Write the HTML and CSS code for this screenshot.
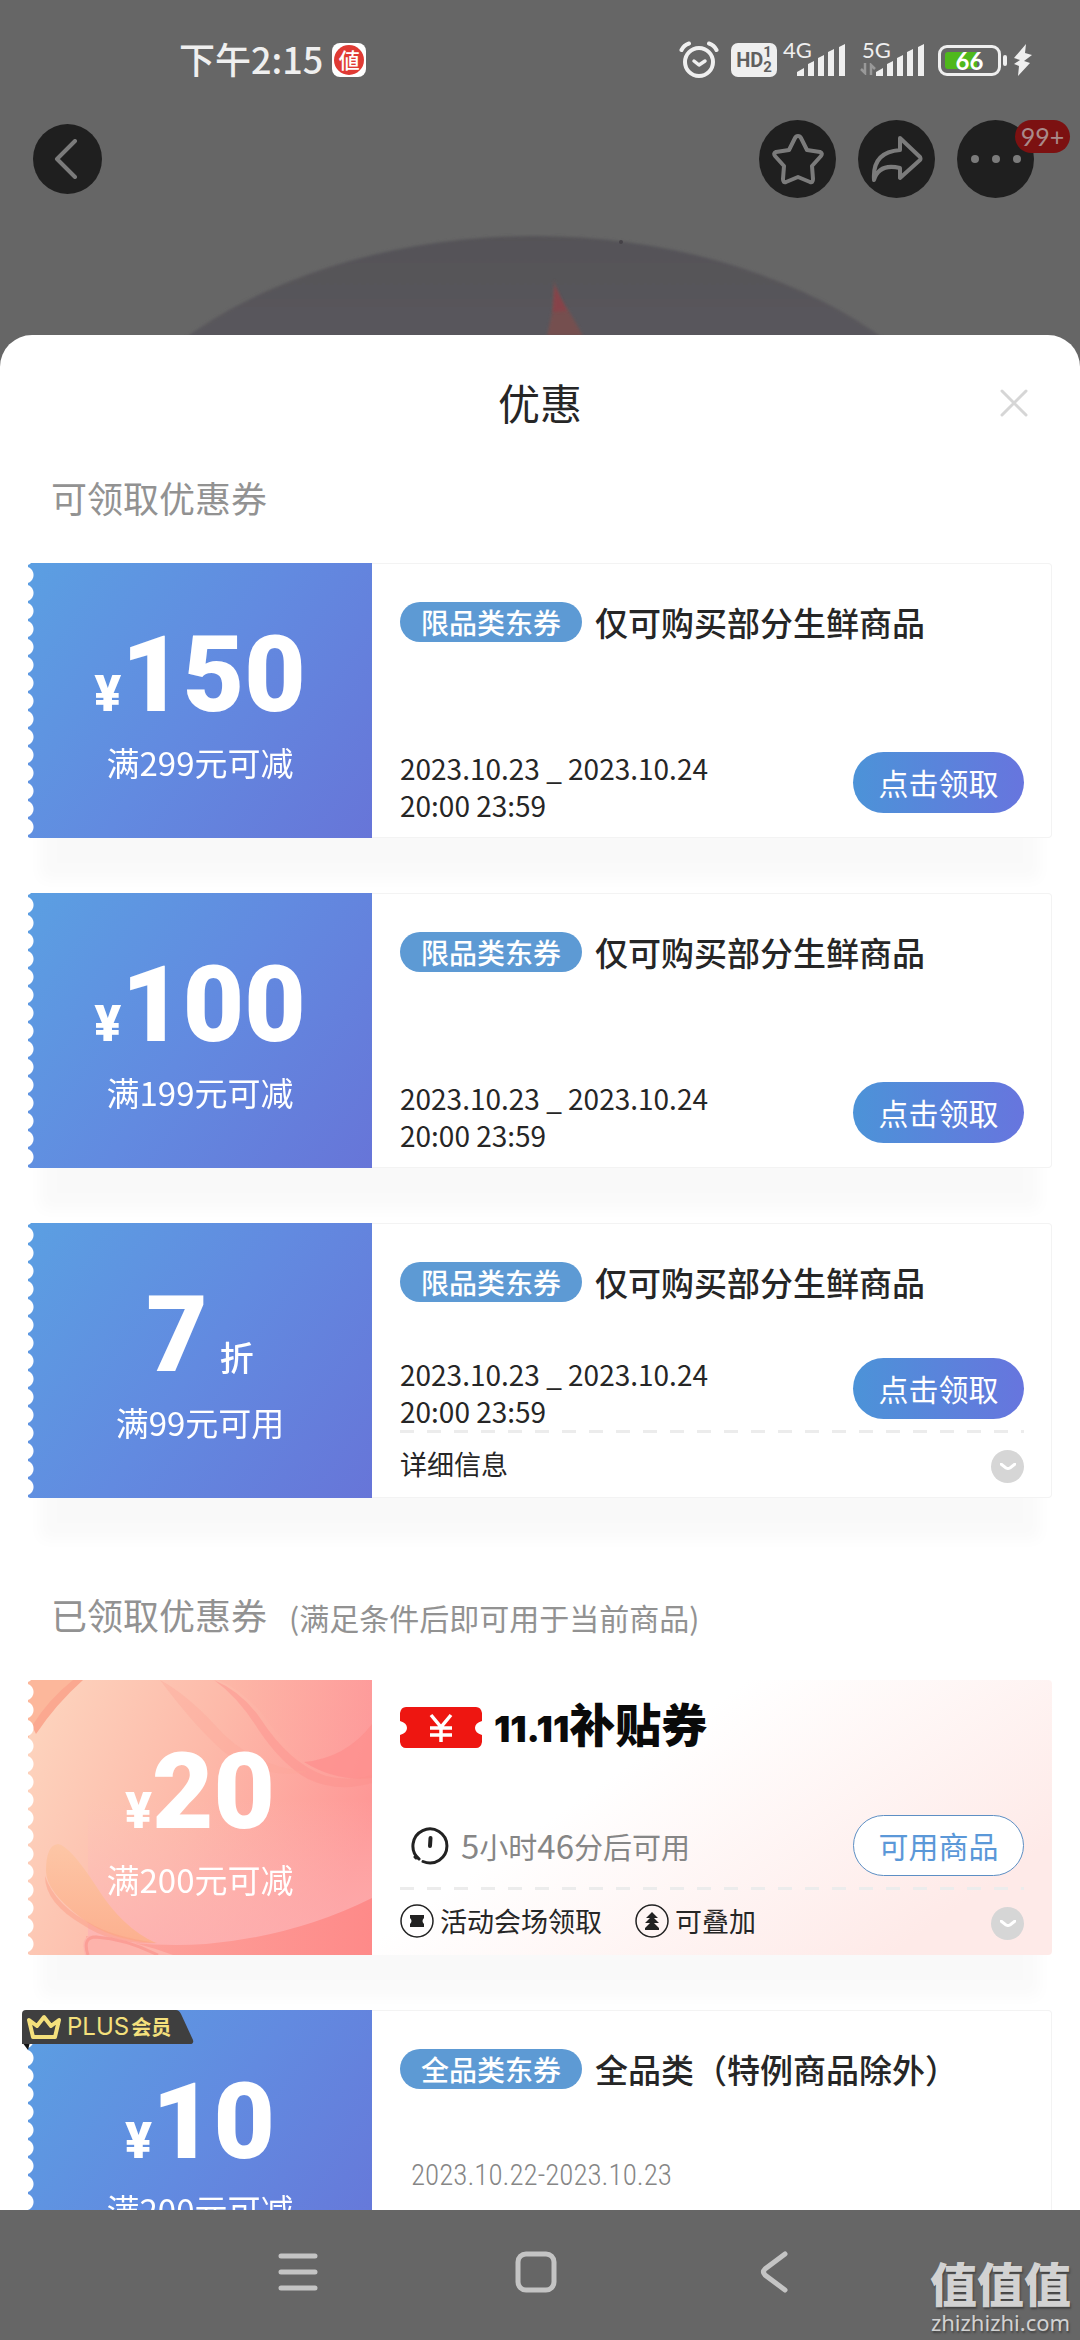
FILE: index.html
```html
<!DOCTYPE html>
<html lang="zh-CN">
<head>
<meta charset="utf-8">
<meta name="viewport" content="width=device-width, initial-scale=1">
<title>优惠</title>
<link rel="stylesheet" href="styles.css">
</head>
<body>
<div class="screen">
  <header class="hero">
    <svg class="plate" viewBox="0 0 1080 335" preserveAspectRatio="xMidYMax slice" aria-hidden="true">
      <defs>
        <linearGradient id="plateFill" x1="0" y1="0" x2="0" y2="1">
          <stop offset="0" stop-color="#545257"/>
          <stop offset=".3" stop-color="#5e5b60"/>
        </linearGradient>
        <filter id="soft" x="-10%" y="-10%" width="120%" height="120%"><feGaussianBlur stdDeviation="1.5"/></filter>
      </defs>
      <ellipse cx="534" cy="561" rx="480" ry="325" fill="url(#plateFill)" filter="url(#soft)"/>
      <path d="M547 336l6-28 1-28q4 20 15 31l14 25z" fill="#75504f" filter="url(#soft)"/>
      <path d="M553 312l2-26 12 25z" fill="#864349" filter="url(#soft)"/>
      <circle cx="621" cy="242" r="2" fill="#454247"/>
    </svg>

    <div class="status">
      <span class="status-time">下午2:15</span>
      <span class="app-mark"><span class="app-mark-dot">値</span></span>
      <div class="status-icons">
        <svg width="40" height="38" viewBox="0 0 40 38" fill="none" stroke="#efefef" stroke-linecap="round">
          <circle cx="20" cy="21" r="14" stroke-width="4"/>
          <path d="M2.500 9Q5 4 10 2.500M37.500 9Q35 4 30 2.500" stroke-width="4"/>
          <path d="M15 20l5 4 6-4" stroke-width="3.500" stroke-linejoin="round"/>
        </svg>
        <span class="hd"><b>HD</b><span class="hd-sims"><b>1</b><b>2</b></span></span>
        <span class="signal">
          <span class="net">4G</span>
          <svg width="48" height="32" viewBox="0 0 48 32" fill="#efefef"><path d="M0 32v-4l7-4v8zM11 32V20l6-3v15zM21 32V14l6-3v21zM31 32V8l6-3v27zM42 32V3l6-3v32z"/></svg>
        </span>
        <span class="signal">
          <span class="net">5G</span>
          <svg class="traffic" width="16" height="12" viewBox="0 0 16 12" fill="none" stroke="#999" stroke-width="2.500"><path d="M5 0v10L1 6M11 12V2l4 4"/></svg>
          <svg width="48" height="32" viewBox="0 0 48 32" fill="#efefef"><path d="M0 32v-4l7-4v8zM11 32V20l6-3v15zM21 32V14l6-3v21zM31 32V8l6-3v27zM42 32V3l6-3v32z"/></svg>
        </span>
        <span class="battery"><span class="battery-level">66</span></span>
        <svg width="20" height="32" viewBox="0 0 20 32" fill="#efefef"><path d="M13 0L1 14l6 2-6 4 5 2-1 10L17 19l-6-2 8-6-7-2z"/></svg>
      </div>
    </div>

    <nav class="tools" aria-label="商品">
      <button class="tool tool-back" type="button" aria-label="返回">
        <svg width="24" height="40" viewBox="0 0 24 40"><path d="M21 2L3 20l18 18"/></svg>
      </button>
      <button class="tool" type="button" aria-label="收藏">
        <svg width="52" height="52" viewBox="0 0 52 52"><path d="M26 3q2 0 3 2l6 12 13 2q3 1 1 4l-9 10 1 13q0 4-3 3l-12-5-12 5q-3 1-3-3l1-13-9-10q-2-3 1-4l13-2 6-12q1-2 3-2z"/></svg>
      </button>
      <button class="tool" type="button" aria-label="分享">
        <svg width="52" height="48" viewBox="0 0 52 48"><path d="M29 3l20 19q1 2 0 3L29 43V33Q8 28 3 45 1 17 29 15z"/></svg>
      </button>
      <button class="tool" type="button" aria-label="更多">
        <svg class="dots" width="52" height="12" viewBox="0 0 52 12"><circle cx="5" cy="6" r="4"/><circle cx="26" cy="6" r="4"/><circle cx="47" cy="6" r="4"/></svg>
        <span class="badge">99+</span>
      </button>
    </nav>
  </header>

  <main class="sheet">
    <div class="sheet-head">
      <h1 class="sheet-title">优惠</h1>
      <button class="close" type="button" aria-label="关闭">
        <svg width="28" height="28" viewBox="0 0 28 28" fill="none" stroke="#d6d6d6" stroke-width="3" stroke-linecap="round"><path d="M2 2l24 24M26 2L2 26"/></svg>
      </button>
    </div>

    <section class="group">
      <h2 class="group-title">可领取优惠券</h2>
      <div class="coupons">
        <article class="coupon">
          <div class="face">
            <p class="amount"><span class="unit">¥</span>150</p>
            <p class="rule">满299元可减</p>
          </div>
          <div class="body">
            <h3 class="name"><span class="tag">限品类东券</span>仅可购买部分生鲜商品</h3>
            <div class="action">
              <p class="period">2023.10.23 _ 2023.10.24<br>20:00 23:59</p>
              <button class="claim" type="button">点击领取</button>
            </div>
          </div>
        </article>

        <article class="coupon">
          <div class="face">
            <p class="amount"><span class="unit">¥</span>100</p>
            <p class="rule">满199元可减</p>
          </div>
          <div class="body">
            <h3 class="name"><span class="tag">限品类东券</span>仅可购买部分生鲜商品</h3>
            <div class="action">
              <p class="period">2023.10.23 _ 2023.10.24<br>20:00 23:59</p>
              <button class="claim" type="button">点击领取</button>
            </div>
          </div>
        </article>

        <article class="coupon">
          <div class="face">
            <p class="amount">7<span class="fold">折</span></p>
            <p class="rule">满99元可用</p>
          </div>
          <div class="body has-detail">
            <h3 class="name"><span class="tag">限品类东券</span>仅可购买部分生鲜商品</h3>
            <div class="action">
              <p class="period">2023.10.23 _ 2023.10.24<br>20:00 23:59</p>
              <button class="claim" type="button">点击领取</button>
            </div>
            <div class="detail">
              <span>详细信息</span>
              <button class="more" type="button" aria-label="展开"><svg width="16" height="8" viewBox="0 0 16 8"><path d="M1 1l5 4q2 1 4 0l5-4"/></svg></button>
            </div>
          </div>
        </article>
      </div>
    </section>

    <section class="group group-owned">
      <h2 class="group-title">已领取优惠券<small class="group-note">(满足条件后即可用于当前商品)</small></h2>
      <div class="coupons">
        <article class="coupon coupon-pink">
          <div class="face">
            <svg class="art" viewBox="0 0 344 275" preserveAspectRatio="none" aria-hidden="true">
              <defs>
                <linearGradient id="base" x1="0" y1=".2" x2="1" y2=".5">
                  <stop offset="0" stop-color="#fdd3bd"/><stop offset=".5" stop-color="#fdb9a9"/><stop offset="1" stop-color="#fe9796"/>
                </linearGradient>
                <linearGradient id="leaf" x1="0" y1="0" x2="0" y2="1">
                  <stop offset="0" stop-color="#fdc6a6"/><stop offset="1" stop-color="#fcb08f"/>
                </linearGradient>
                <linearGradient id="coral" x1="0" y1="0" x2="1" y2="0">
                  <stop offset="0" stop-color="#fda79e"/><stop offset="1" stop-color="#fe8a89"/>
                </linearGradient>
                <linearGradient id="veil" x1="0" y1="0" x2="1" y2="0">
                  <stop offset="0" stop-color="#fdb7a6"/><stop offset="1" stop-color="#fd9a9b"/>
                </linearGradient>
                <linearGradient id="lower" x1="0" y1="0" x2="0" y2="1">
                  <stop offset="0" stop-color="#fdbfc0" stop-opacity="0"/><stop offset="1" stop-color="#fdafb2" stop-opacity=".8"/>
                </linearGradient>
              </defs>
              <path fill="url(#base)" d="M0 0h344v275H0z"/>
              <path fill="url(#lower)" d="M60 120h284v155H60z"/>
              <path fill="#fcb79b" d="M0 0h48Q20 22 0 58z"/>
              <path fill="#fba890" d="M45 0h10Q28 24 8 54L4 46Q20 20 45 0z"/>
              <path fill="url(#veil)" opacity=".7" d="M190 0h154v44q-26 36-68 38-22-20-42-48-20-24-44-34z"/>
              <path fill="#fe8f8e" opacity=".75" d="M344 44v54q-36 4-68-16 42-4 68-38z"/>
              <path fill="#fd908c" opacity=".45" d="M186 0q28 12 46 38 30 46 66 58 24 6 46-1v8q-34 10-64-4-26-14-50-50-20-32-44-49z"/>
              <path fill="#fda799" opacity=".35" d="M132 0q26 14 54 44 36 42 94 48-46 8-84-20-28-24-64-72z"/>
              <path fill="url(#coral)" d="M58 256q60 12 120 8 90-8 166-46v57H60z"/>
              <path fill="url(#leaf)" d="M30 164q12 2 38 42 26 42 60 57-46-2-76-26-34-26-34-46 0-26 12-27z"/>
              <path fill="#fb9d85" opacity=".5" d="M17 196q10 30 50 50 24 12 62 17-44 2-74-18-38-22-38-49z"/>
              <path fill="#fdb3ab" d="M57 275q-6-20 10-20 40 6 78 20z"/>
              <path fill="none" stroke="#fa9088" stroke-opacity=".6" stroke-width="3" d="M60 275q-6-18 8-18 30 2 62 18"/>
            </svg>
            <p class="amount"><span class="unit">¥</span>20</p>
            <p class="rule">满200元可减</p>
          </div>
          <div class="body has-detail">
            <h3 class="promo">
              <svg width="82" height="41" viewBox="0 0 82 41" aria-hidden="true">
                <path fill="#ee1611" d="M6 0h70q5 0 6 6v8q-7 2-7 7t7 7v7q-1 6-6 6H6q-5 0-6-6v-7q7-2 7-7t-7-7V6q1-6 6-6z"/>
                <path fill="none" stroke="#fff" stroke-width="3.500" d="M31 8l10 12L51 8M41 20v15M30 21h22M30 28h22"/>
              </svg>
              <span class="promo-text"><span class="promo-date">11.11</span>补贴券</span>
            </h3>
            <div class="action">
              <p class="wait">
                <svg width="38" height="38" viewBox="0 0 38 38" fill="none" stroke="#222" stroke-linecap="round" aria-hidden="true"><path stroke-width="3" d="M8 32a17 17 0 1 1 4 2.500M4 30l1 1"/><path stroke-width="4" d="M19.500 11L19 19"/></svg>
                <span><span class="num">5</span>小时<span class="num">46</span>分后可用</span>
              </p>
              <a class="claim claim-outline" href="#">可用商品</a>
            </div>
            <div class="detail">
              <span class="perk"><svg width="34" height="34" viewBox="0 0 34 34" aria-hidden="true"><circle cx="17" cy="17" r="16" fill="none" stroke="#222" stroke-width="1.500"/><path fill="#222" d="M10 11h14v3q-3 3 0 6v3H10v-3q3-3 0-6z"/></svg>活动会场领取</span>
              <span class="perk"><svg width="34" height="34" viewBox="0 0 34 34" aria-hidden="true"><circle cx="17" cy="17" r="16" fill="none" stroke="#222" stroke-width="1.500"/><path fill="#222" d="M17 8l6 6h-4l5 5h-5l5 5v2H10v-2l5-5h-5l5-5h-4z"/></svg>可叠加</span>
              <button class="more" type="button" aria-label="展开"><svg width="16" height="8" viewBox="0 0 16 8"><path d="M1 1l5 4q2 1 4 0l5-4"/></svg></button>
            </div>
          </div>
        </article>

        <article class="coupon">
          <div class="face">
            <p class="amount"><span class="unit">¥</span>10</p>
            <p class="rule">满200元可减</p>
          </div>
          <div class="plus">
            <svg class="plus-shape" viewBox="0 0 172 40" aria-hidden="true"><path fill="#111" d="M0 32h8l-2 8z"/><path fill="#3f3f3f" d="M4 0h150q3 0 5 4l12 26q1 4-3 4H0V4q0-4 4-4z"/></svg>
            <svg width="34" height="26" viewBox="0 0 34 26" fill="none" stroke="#f4e07c" stroke-width="4" stroke-linejoin="round" aria-hidden="true"><path d="M2 6l4 17h22l4-17-8 6-7-9-7 9z"/></svg>
            <span class="plus-text">PLUS<b>会员</b></span>
          </div>
          <div class="body has-detail">
            <h3 class="name"><span class="tag">全品类东券</span>全品类（特例商品除外）</h3>
            <div class="action">
              <p class="wait wait-date">2023.10.22-2023.10.23</p>
            </div>
            <div class="detail">
              <button class="more" type="button" aria-label="展开"><svg width="16" height="8" viewBox="0 0 16 8"><path d="M1 1l5 4q2 1 4 0l5-4"/></svg></button>
            </div>
          </div>
        </article>
      </div>
    </section>
  </main>

  <footer class="sysnav">
    <button class="sys" type="button" aria-label="最近任务"><svg width="40" height="40" viewBox="0 0 40 40"><path d="M3 4h34M3 20h34M3 36h34"/></svg></button>
    <button class="sys" type="button" aria-label="主页"><svg width="42" height="42" viewBox="0 0 42 42"><rect x="3" y="3" width="36" height="36" rx="8"/></svg></button>
    <button class="sys" type="button" aria-label="返回"><svg width="28" height="42" viewBox="0 0 28 42"><path d="M25 3L5 18q-3 3 0 6l20 15"/></svg></button>
    <div class="watermark"><span class="watermark-name">值值值</span><span>zhizhizhi.com</span></div>
  </footer>
</div>
</body>
</html>
```
FILE: styles.css
```css
* { box-sizing: border-box; }

body {
  margin: 0;
  background: #666;
  color: #262626;
  font-family: "Noto Sans CJK SC", sans-serif;
}

h1, h2, h3, p { margin: 0; font-weight: 400; }

button {
  padding: 0;
  border: 0;
  background: none;
  color: inherit;
  font: inherit;
}

svg { display: block; flex: none; }

.screen {
  display: flex;
  flex-direction: column;
  height: 100vh;
  overflow: hidden;
}

/* dimmed product page behind the sheet */
.hero {
  position: relative;
  flex: none;
  padding-bottom: 137px;
}

.plate {
  position: absolute;
  left: 0;
  bottom: 0;
  width: 100%;
  height: 100%;
}

.status {
  position: relative;
  display: flex;
  align-items: center;
  height: 120px;
  padding: 0 47px 0 179px;
  color: #efefef;
}

.status-time {
  padding-bottom: 5px;
  font-size: 36px;
  font-weight: 500;
  line-height: 40px;
}

.app-mark {
  display: grid;
  place-items: center;
  width: 34px;
  height: 34px;
  margin-left: 9px;
  border-radius: 8px;
  background: #fff;
}

.app-mark-dot {
  width: 30px;
  height: 30px;
  border-radius: 50%;
  background: #e03a34;
  color: #fff;
  font-size: 21px;
  font-weight: 500;
  line-height: 28px;
  text-align: center;
}

.status-icons {
  display: flex;
  align-items: center;
  margin-left: auto;
}

.hd {
  display: flex;
  align-items: center;
  justify-content: center;
  width: 46px;
  height: 34px;
  margin-left: 12px;
  border-radius: 7px;
  background: #efefef;
  color: #5f5f5f;
  font-family: Roboto, sans-serif;
  font-size: 20px;
}

.hd-sims {
  display: grid;
  font-size: 15px;
  line-height: 15px;
}

.signal {
  position: relative;
  display: flex;
  padding-left: 14px;
  margin-left: 6px;
}

.signal + .signal { padding-left: 16px; margin-left: 15px; }

.net {
  position: absolute;
  left: 0;
  top: -5px;
  font-family: Lato, sans-serif;
  font-size: 22px;
  line-height: 22px;
}

.signal + .signal .net { left: 2px; }

.traffic {
  position: absolute;
  left: 0;
  bottom: 1px;
}

.battery {
  position: relative;
  width: 63px;
  height: 31px;
  margin: 0 12px 0 14px;
  padding: 4px;
  border: 3px solid #efefef;
  border-radius: 9px;
}

.battery::after {
  content: "";
  position: absolute;
  right: -9px;
  top: 7px;
  width: 4px;
  height: 11px;
  border-radius: 2px;
  background: #efefef;
}

.battery-level {
  display: block;
  height: 100%;
  border-radius: 3px;
  background: linear-gradient(90deg, #4fb81c 66%, transparent 66%);
  color: #fff;
  font-family: Lato, sans-serif;
  font-size: 24px;
  font-weight: 700;
  line-height: 18px;
  text-align: center;
}

.tools {
  position: relative;
  display: flex;
  align-items: center;
  gap: 22px;
  padding: 0 46px 0 33px;
}

.tool {
  position: relative;
  display: grid;
  place-items: center;
  width: 77px;
  height: 78px;
  border-radius: 50%;
  background: #1f1f1f;
}

.tool svg {
  fill: none;
  stroke: #7b7b7b;
  stroke-width: 4;
  stroke-linecap: round;
  stroke-linejoin: round;
}

.tool .dots { fill: #7b7b7b; stroke: none; }

.tool-back {
  width: 69px;
  height: 70px;
  margin-right: auto;
  padding-right: 4px;
}

.badge {
  position: absolute;
  left: 58px;
  top: 0;
  width: 55px;
  height: 33px;
  border-radius: 17px;
  background: #7c1111;
  color: #a98a8a;
  font-family: Lato, sans-serif;
  font-size: 25px;
  line-height: 33px;
  text-align: center;
}

/* coupon sheet */
.sheet {
  position: relative;
  flex: 1;
  min-height: 0;
  overflow: hidden;
  border-radius: 32px 32px 0 0;
  background: #fff;
}

.sheet-head {
  position: relative;
  display: flex;
  align-items: center;
  justify-content: center;
  height: 134px;
}

.sheet-title { font-size: 42px; line-height: 48px; }

.close {
  position: absolute;
  right: 52px;
  top: 54px;
}

.group { padding: 0 28px; }
.group-owned { padding-top: 88px; }

.group-title {
  display: flex;
  align-items: baseline;
  height: 94px;
  padding: 0 23px;
  color: #929292;
  font-size: 36px;
  line-height: 56px;
}

.group-note { margin-left: 22px; font-size: 30px; line-height: 40px; }

.coupons {
  display: flex;
  flex-direction: column;
  gap: 55px;
}

.coupon {
  position: relative;
  display: grid;
  grid-template-columns: 344px 1fr;
  min-height: 275px;
  box-shadow: 0 54px 14px -12px rgba(0, 0, 0, .022);
}

.face {
  position: relative;
  padding-top: 72px;
  background: linear-gradient(125deg, #5b9fe2, #628ae0 50%, #6775d8);
  color: #fff;
  text-align: center;
  -webkit-mask: radial-gradient(circle at -3px 9px, transparent 8px, #000 9px) 0 3px / 100% 18px repeat-y;
  mask: radial-gradient(circle at -3px 9px, transparent 8px, #000 9px) 0 3px / 100% 18px repeat-y;
}

.amount {
  position: relative;
  display: flex;
  align-items: baseline;
  justify-content: center;
  height: 84px;
  font-family: Roboto, sans-serif;
  font-size: 106px;
  font-weight: 900;
  line-height: 80px;
}

.unit { font-size: 50px; line-height: 48px; }

.fold {
  margin-left: 12px;
  font-family: "Noto Sans CJK SC", sans-serif;
  font-size: 34px;
  font-weight: 500;
  line-height: 40px;
}

.rule {
  position: relative;
  margin-top: 21px;
  font-size: 33px;
  line-height: 44px;
}

.body {
  display: flex;
  flex-direction: column;
  padding: 38px 27px 13px 28px;
  border: solid #f3f3f3;
  border-width: 1px 1px 1px 0;
  border-radius: 0 4px 4px 0;
  background: #fff;
}

.body.has-detail { padding-bottom: 0; }

.name {
  display: flex;
  align-items: center;
  gap: 13px;
  font-size: 33px;
  font-weight: 500;
  line-height: 40px;
}

.tag {
  padding: 0 21px;
  border-radius: 21px;
  background: #5d9ad4;
  color: #fff;
  font-size: 28px;
}

.action {
  display: flex;
  align-items: flex-start;
  justify-content: space-between;
  height: 74px;
  margin-top: auto;
}

.period { font-size: 28px; line-height: 37px; }

.claim {
  width: 171px;
  margin-top: 2px;
  border-radius: 31px;
  background: linear-gradient(90deg, #4c93d8, #6775de);
  color: #fff;
  font-size: 30px;
  line-height: 61px;
  text-align: center;
}

.detail {
  display: flex;
  align-items: center;
  gap: 33px;
  height: 67px;
  background: repeating-linear-gradient(90deg, #ececec 0 14px, transparent 14px 27px) top / 100% 3px no-repeat;
  font-size: 27px;
}

.more {
  display: grid;
  place-items: center;
  width: 33px;
  height: 33px;
  margin: 6px 0 0 auto;
  border-radius: 50%;
  background: #d6d6d6;
}

.more svg {
  fill: none;
  stroke: #fff;
  stroke-width: 3;
  stroke-linecap: round;
}

.coupon-pink .body {
  border-color: transparent;
  background: linear-gradient(145deg, #fff 35%, #feeae8 85%) border-box;
}

.art {
  position: absolute;
  inset: 0;
  width: 100%;
  height: 100%;
}

.promo {
  display: flex;
  align-items: center;
  gap: 12px;
  height: 56px;
  margin-top: -20px;
}

.promo-text {
  padding-bottom: 4px;
  color: #0a0a0a;
  font-size: 46px;
  font-weight: 900;
  line-height: 52px;
}

.promo-date {
  font-family: Inter, sans-serif;
  font-size: 36px;
}

.wait {
  display: flex;
  align-items: center;
  gap: 12px;
  padding-left: 11px;
  color: #868686;
  font-size: 29px;
  line-height: 64px;
}

.num { font-size: 33px; }

.wait-date {
  font-family: "Roboto Condensed", "Liberation Sans Narrow", Roboto, sans-serif;
  font-size: 29px;
  font-weight: 300;
}

.claim-outline {
  border: 1px solid #5d8fc4;
  background: #fff;
  color: #5b98d8;
  line-height: 59px;
  text-decoration: none;
}

.perk {
  display: flex;
  align-items: center;
  gap: 6px;
}

/* membership ribbon, hangs over the coupon's left edge */
.plus {
  position: absolute;
  left: -6px;
  top: 0;
  display: flex;
  align-items: center;
  gap: 6px;
  width: 172px;
  height: 34px;
  padding-left: 5px;
  color: #f4e07c;
}

.plus-shape {
  position: absolute;
  left: 0;
  top: 0;
  width: 172px;
  height: 40px;
}

.plus > svg, .plus-text { position: relative; }
.plus > .plus-shape { position: absolute; }

.plus-text {
  font-family: Inter, "Noto Sans CJK SC", sans-serif;
  font-size: 24px;
  line-height: 32px;
}

.plus-text b { margin-left: 2px; font-size: 20px; }

/* system navigation */
.sysnav {
  position: relative;
  display: grid;
  grid-template-columns: repeat(3, 1fr);
  flex: none;
  height: 130px;
  padding: 0 187px 6px 179px;
  background: #666;
}

.sys { display: grid; place-items: center; }

.sys svg {
  fill: none;
  stroke: #c4c4c4;
  stroke-width: 5;
  stroke-linecap: round;
}

.watermark {
  position: absolute;
  right: 9px;
  bottom: 5px;
  display: grid;
  justify-items: center;
  color: #d2d2d2;
  font-family: "Noto Sans", sans-serif;
  font-size: 22px;
  line-height: 26px;
  text-shadow: 1px 2px 2px #444;
}

.watermark-name {
  font-family: "Noto Sans CJK SC", sans-serif;
  font-size: 47px;
  font-weight: 900;
  line-height: 54px;
}
```
